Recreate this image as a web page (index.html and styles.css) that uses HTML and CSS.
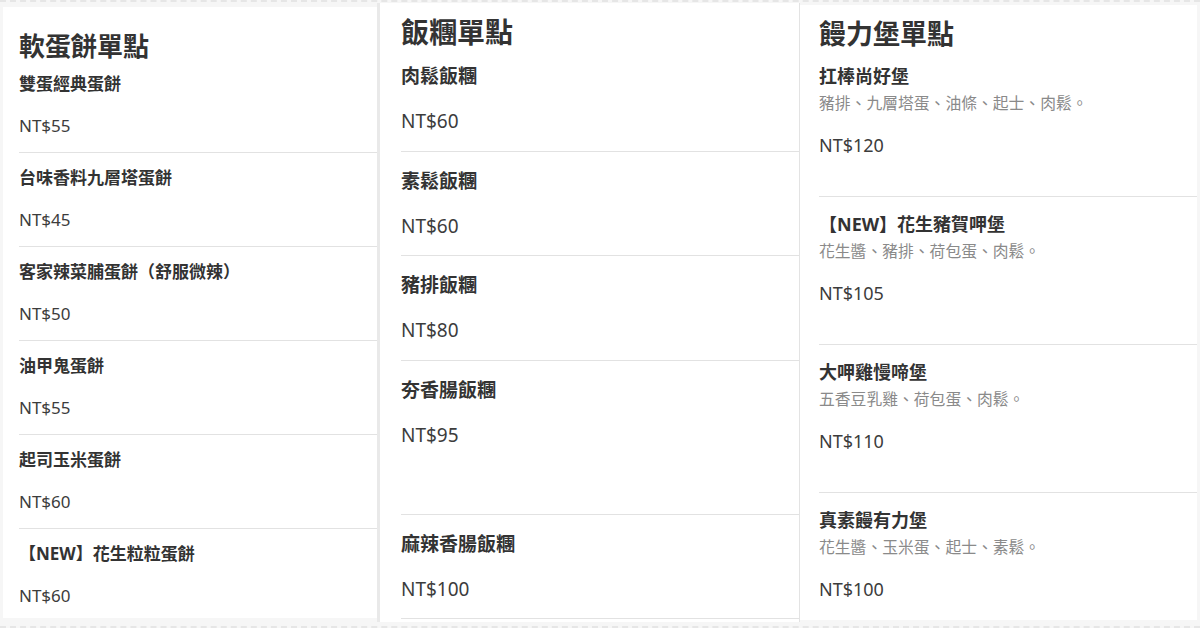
FILE: index.html
```html
<!DOCTYPE html>
<html lang="zh-Hant">
<head>
    <meta charset="UTF-8">
    <meta name="viewport" content="width=device-width, initial-scale=1.0">
    <title>菜單單點</title>
    <link rel="stylesheet" href="styles.css">
</head>
<body>
    <main class="menu-board">
        <section class="panel panel-egg">
            <h2 class="panel-title">軟蛋餅單點</h2>
            <div class="item">
                <div class="item-name">雙蛋經典蛋餅</div>
                <div class="item-price">NT$55</div>
            </div>
            <div class="item">
                <div class="item-name">台味香料九層塔蛋餅</div>
                <div class="item-price">NT$45</div>
            </div>
            <div class="item">
                <div class="item-name">客家辣菜脯蛋餅（舒服微辣）</div>
                <div class="item-price">NT$50</div>
            </div>
            <div class="item">
                <div class="item-name">油甲鬼蛋餅</div>
                <div class="item-price">NT$55</div>
            </div>
            <div class="item">
                <div class="item-name">起司玉米蛋餅</div>
                <div class="item-price">NT$60</div>
            </div>
            <div class="item">
                <div class="item-name">【NEW】花生粒粒蛋餅</div>
                <div class="item-price">NT$60</div>
            </div>
        </section>

        <section class="panel panel-rice">
            <h2 class="panel-title">飯糰單點</h2>
            <div class="item">
                <div class="item-name">肉鬆飯糰</div>
                <div class="item-price">NT$60</div>
            </div>
            <div class="item">
                <div class="item-name">素鬆飯糰</div>
                <div class="item-price">NT$60</div>
            </div>
            <div class="item">
                <div class="item-name">豬排飯糰</div>
                <div class="item-price">NT$80</div>
            </div>
            <div class="item item-tall">
                <div class="item-name">夯香腸飯糰</div>
                <div class="item-price">NT$95</div>
            </div>
            <div class="item">
                <div class="item-name">麻辣香腸飯糰</div>
                <div class="item-price">NT$100</div>
            </div>
        </section>

        <section class="panel panel-burger">
            <h2 class="panel-title">饅力堡單點</h2>
            <div class="item">
                <div class="item-name">扛棒尚好堡</div>
                <div class="item-desc">豬排、九層塔蛋、油條、起士、肉鬆。</div>
                <div class="item-price">NT$120</div>
            </div>
            <div class="item">
                <div class="item-name">【NEW】花生豬賀呷堡</div>
                <div class="item-desc">花生醬、豬排、荷包蛋、肉鬆。</div>
                <div class="item-price">NT$105</div>
            </div>
            <div class="item">
                <div class="item-name">大呷雞慢啼堡</div>
                <div class="item-desc">五香豆乳雞、荷包蛋、肉鬆。</div>
                <div class="item-price">NT$110</div>
            </div>
            <div class="item">
                <div class="item-name">真素饅有力堡</div>
                <div class="item-desc">花生醬、玉米蛋、起士、素鬆。</div>
                <div class="item-price">NT$100</div>
            </div>
        </section>
    </main>
</body>
</html>
```

FILE: styles.css
```css
body {
    font-family: "Noto Sans", "Noto Sans CJK TC", sans-serif;
    margin: 0;
    padding: 0;
    background-color: #f6f6f6;
    color: #333;
}

.menu-board {
    display: flex;
    align-items: flex-start;
    height: 628px;
    box-sizing: border-box;
    padding: 0 3px;
    border-top: 2px dashed #e6e6e6;
    border-bottom: 2px dashed #e6e6e6;
    overflow: hidden;
}

.panel {
    background-color: #fff;
    box-sizing: border-box;
    overflow: hidden;
}

.panel-title {
    margin: 0;
    font-weight: 700;
    color: #333;
}

.item {
    border-bottom: 1px solid #e2e2e2;
}

.item-name {
    font-weight: 700;
    color: #333;
}

.item-price {
    color: #3c3c3c;
}

.item-desc {
    color: #8a8a8a;
}

/* left panel: 軟蛋餅 */
.panel-egg {
    width: 374px;
    height: 611px;
    margin-top: 5px;
    padding: 26px 0 0 16px;
}

.panel-egg .panel-title {
    font-size: 26px;
    line-height: 26px;
}

.panel-egg .item {
    padding: 13px 0 14.5px;
}

.panel-egg .item-name,
.panel-egg .item-price {
    font-size: 17px;
    line-height: 24px;
}

.panel-egg .item-price {
    margin-top: 17.5px;
}

/* middle panel: 飯糰 */
.panel-rice {
    width: 423px;
    height: 619px;
    margin-top: 1px;
    padding: 14px 0 0 21px;
    border-left: 3px solid #e9e9e9;
    border-right: 1px solid #e3e3e3;
}

.panel-rice .panel-title {
    font-size: 28px;
    line-height: 30px;
}

.panel-rice .item {
    padding: 16px 0 16.5px;
}

.panel-rice .item-tall {
    padding-bottom: 66px;
}

.panel-rice .item-name,
.panel-rice .item-price {
    font-size: 19px;
    line-height: 26px;
}

.panel-rice .item-price {
    margin-top: 19px;
}

/* right panel: 饅力堡 */
.panel-burger {
    flex: 1;
    height: 615px;
    margin-top: 3px;
    padding: 14px 0 0 19px;
}

.panel-burger .panel-title {
    font-size: 27px;
    line-height: 30px;
}

.panel-burger .item {
    padding: 14px 0 38px;
}

.panel-burger .item-name,
.panel-burger .item-price {
    font-size: 18px;
    line-height: 26px;
}

.panel-burger .item-desc {
    font-size: 15.8px;
    line-height: 26px;
    margin-top: 1px;
}

.panel-burger .item-price {
    margin-top: 16px;
}
```
